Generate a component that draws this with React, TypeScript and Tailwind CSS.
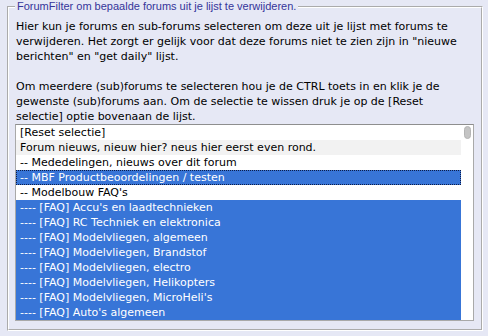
import React from "react";

type Row = { t: string; k: "plain" | "gray" | "sel" | "focus" };

const rows: Row[] = [
  { t: "[Reset selectie]", k: "plain" },
  { t: "Forum nieuws, nieuw hier? neus hier eerst even rond.", k: "gray" },
  { t: "-- Mededelingen, nieuws over dit forum", k: "plain" },
  { t: "-- MBF Productbeoordelingen / testen", k: "focus" },
  { t: "-- Modelbouw FAQ's", k: "plain" },
  { t: "---- [FAQ] Accu's en laadtechnieken", k: "sel" },
  { t: "---- [FAQ] RC Techniek en elektronica", k: "sel" },
  { t: "---- [FAQ] Modelvliegen, algemeen", k: "sel" },
  { t: "---- [FAQ] Modelvliegen, Brandstof", k: "sel" },
  { t: "---- [FAQ] Modelvliegen, electro", k: "sel" },
  { t: "---- [FAQ] Modelvliegen, Helikopters", k: "sel" },
  { t: "---- [FAQ] Modelvliegen, MicroHeli's", k: "sel" },
  { t: "---- [FAQ] Auto's algemeen", k: "sel" },
];

function rowClass(k: Row["k"]) {
  switch (k) {
    case "gray":
      return "h-[15px] leading-[15px] pl-[4px] whitespace-nowrap bg-[#f2f2f2] text-black";
    case "sel":
      return "h-[15px] leading-[15px] pl-[4px] whitespace-nowrap bg-[#3875d7] text-white";
    case "focus":
      return "h-[15px] leading-[13px] pl-[3px] whitespace-nowrap bg-[#3875d7] text-white border border-dotted border-[#0c1c48]";
    default:
      return "h-[15px] leading-[15px] pl-[4px] whitespace-nowrap bg-white text-black";
  }
}

export default function App() {
  return (
    <div className="min-h-screen w-[488px] bg-[#e6e8f5] pl-[7px] pr-[5px] pb-[5px] font-['DejaVu_Sans',Verdana,sans-serif] text-[11px] text-black">
      <fieldset className="border-2 [border-style:groove] border-white pl-[6px] pr-[7px] pt-[6px] pb-[8px] m-0">
        <legend className="px-[2px] font-['Liberation_Sans',Arial,sans-serif] text-[11px] leading-[13px] text-[#35359a]">
          ForumFilter om bepaalde forums uit je lijst te verwijderen.
        </legend>
        <div className="leading-[15px] whitespace-nowrap pl-[1px]">
          <div>Hier kun je forums en sub-forums selecteren om deze uit je lijst met forums te</div>
          <div>verwijderen. Het zorgt er gelijk voor dat deze forums niet te zien zijn in "nieuwe</div>
          <div>berichten" en "get daily" lijst.</div>
          <div className="h-[15px]"></div>
          <div>Om meerdere (sub)forums te selecteren hou je de CTRL toets in en klik je de</div>
          <div>gewenste (sub)forums aan. Om de selectie te wissen druk je op de [Reset</div>
          <div>selectie] optie bovenaan de lijst.</div>
        </div>
        <div className="flex border border-[#a9a9a9] border-t-[#8e8e8e] bg-white">
          <div className="flex-1 flex flex-col">
            {rows.map((r, i) => (
              <div key={i} className={rowClass(r.k)}>
                {r.t}
              </div>
            ))}
          </div>
          <div className="w-[12px] bg-white flex flex-col">
            <div className="ml-[3px] mt-[1px] w-[7px] h-[13px] rounded-full bg-[#c4c4c4] border border-[#b4b4b4]"></div>
          </div>
        </div>
      </fieldset>
    </div>
  );
}
